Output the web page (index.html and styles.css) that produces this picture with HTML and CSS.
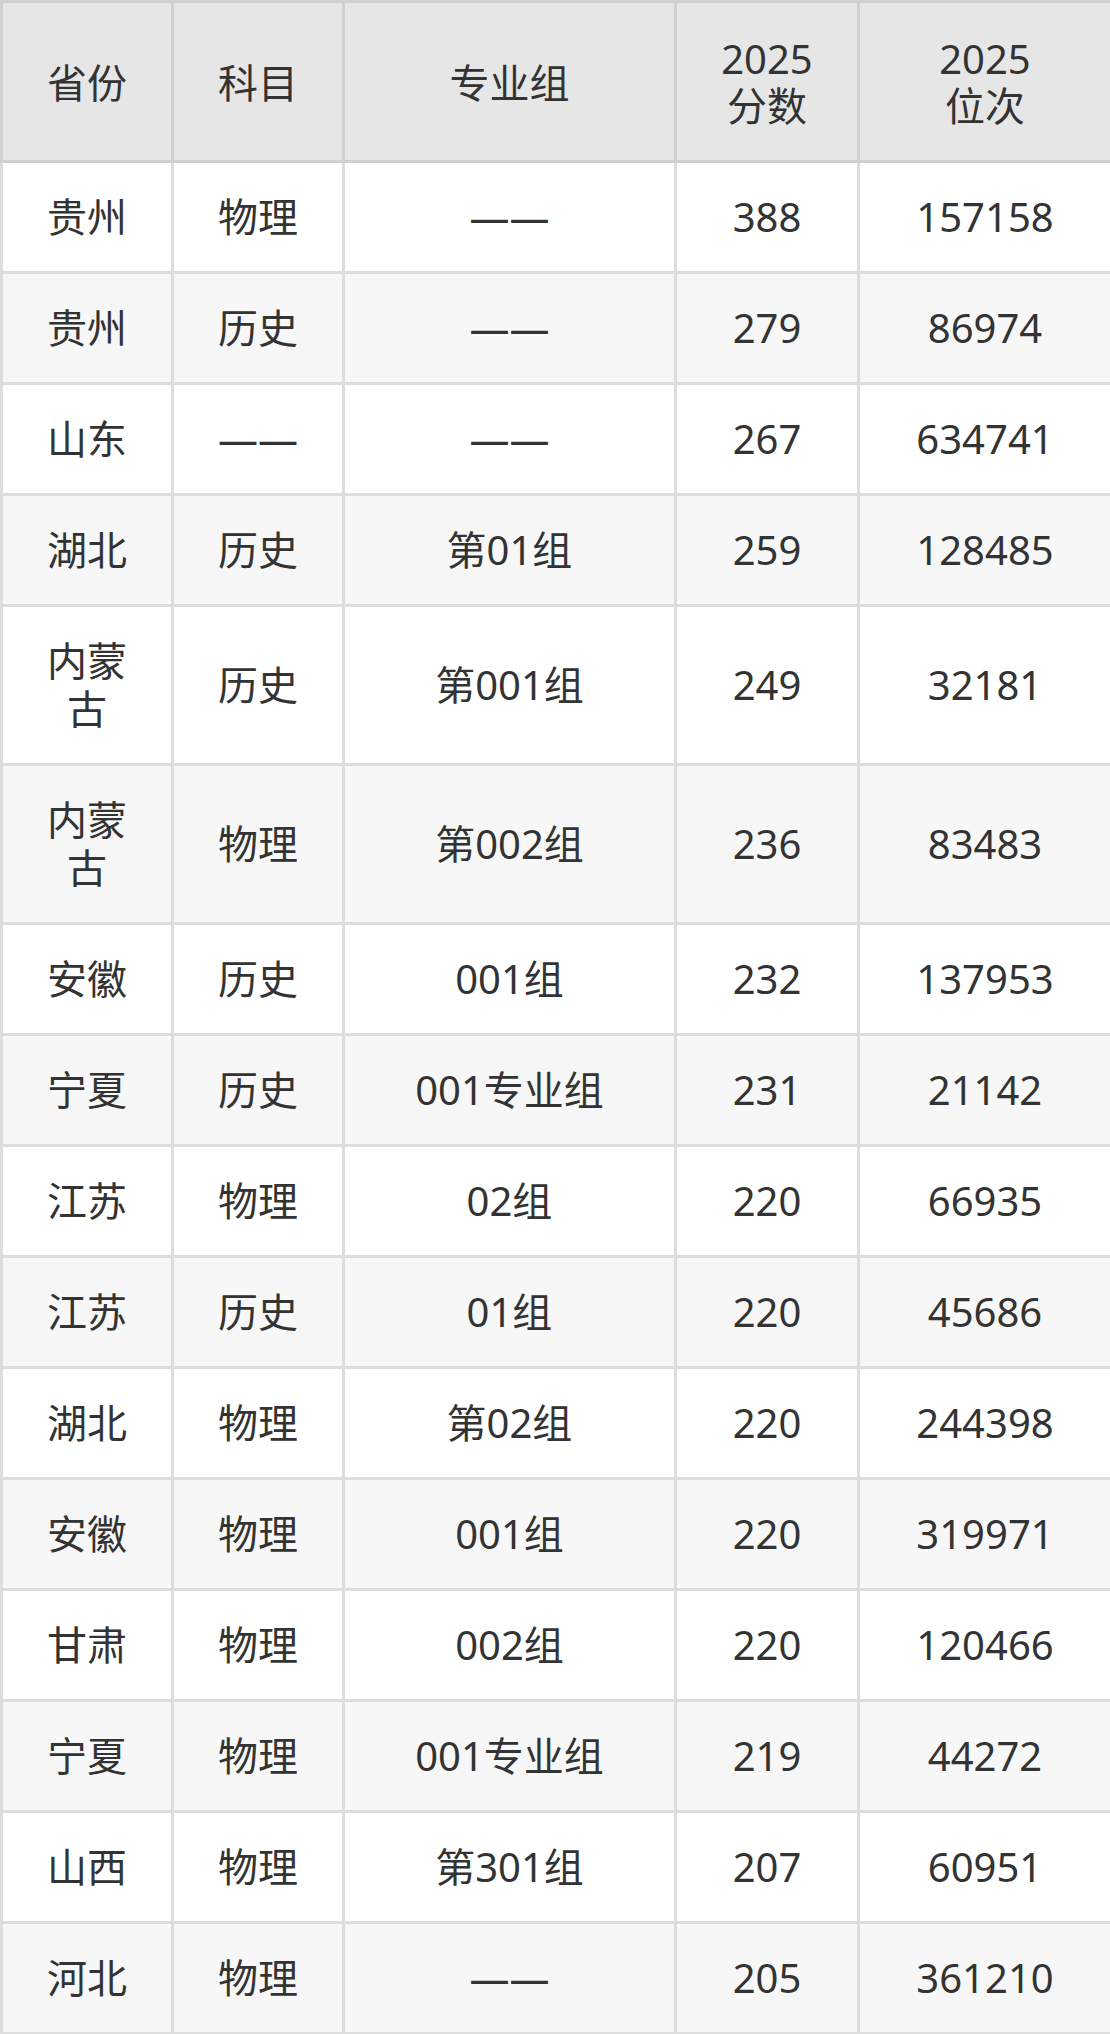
FILE: index.html
```html
<!DOCTYPE html>
<html lang="zh">
<head>
<meta charset="utf-8">
<link rel="stylesheet" href="styles.css">
</head>
<body>
<table class="score-table">
  <colgroup>
    <col class="c1"><col class="c2"><col class="c3"><col class="c4"><col class="c5">
  </colgroup>
  <thead>
    <tr><th>省份</th><th>科目</th><th>专业组</th><th>2025<br>分数</th><th>2025<br>位次</th></tr>
  </thead>
  <tbody>
    <tr><td>贵州</td><td>物理</td><td>——</td><td>388</td><td>157158</td></tr>
    <tr><td>贵州</td><td>历史</td><td>——</td><td>279</td><td>86974</td></tr>
    <tr><td>山东</td><td>——</td><td>——</td><td>267</td><td>634741</td></tr>
    <tr><td>湖北</td><td>历史</td><td>第01组</td><td>259</td><td>128485</td></tr>
    <tr><td>内蒙古</td><td>历史</td><td>第001组</td><td>249</td><td>32181</td></tr>
    <tr><td>内蒙古</td><td>物理</td><td>第002组</td><td>236</td><td>83483</td></tr>
    <tr><td>安徽</td><td>历史</td><td>001组</td><td>232</td><td>137953</td></tr>
    <tr><td>宁夏</td><td>历史</td><td>001专业组</td><td>231</td><td>21142</td></tr>
    <tr><td>江苏</td><td>物理</td><td>02组</td><td>220</td><td>66935</td></tr>
    <tr><td>江苏</td><td>历史</td><td>01组</td><td>220</td><td>45686</td></tr>
    <tr><td>湖北</td><td>物理</td><td>第02组</td><td>220</td><td>244398</td></tr>
    <tr><td>安徽</td><td>物理</td><td>001组</td><td>220</td><td>319971</td></tr>
    <tr><td>甘肃</td><td>物理</td><td>002组</td><td>220</td><td>120466</td></tr>
    <tr><td>宁夏</td><td>物理</td><td>001专业组</td><td>219</td><td>44272</td></tr>
    <tr><td>山西</td><td>物理</td><td>第301组</td><td>207</td><td>60951</td></tr>
    <tr><td>河北</td><td>物理</td><td>——</td><td>205</td><td>361210</td></tr>
  </tbody>
</table>
</body>
</html>
```
FILE: styles.css
```css
html, body {
  margin: 0;
  padding: 0;
  background: #ffffff;
}
.score-table {
  width: 1110px;
  table-layout: fixed;
  border-collapse: collapse;
  font-family: "Noto Sans", "Noto Sans CJK SC", sans-serif;
  font-size: 40px;
  line-height: 48px;
  color: #333333;
}
.c1 { width: 171px; }
.c2 { width: 171px; }
.c3 { width: 332px; }
.c4 { width: 183px; }
.c5 { width: 253px; }
.score-table th,
.score-table td {
  text-align: center;
  vertical-align: middle;
  padding: 30px 28px;
  border: 3px solid #dddddd;
}
.score-table th {
  font-weight: normal;
  background: #e6e6e6;
  border-color: #d0d0d0;
  padding: 32px 20px 31px;
  line-height: 47px;
}
.score-table tbody tr:nth-child(even) td {
  background: #f7f7f7;
}
```
